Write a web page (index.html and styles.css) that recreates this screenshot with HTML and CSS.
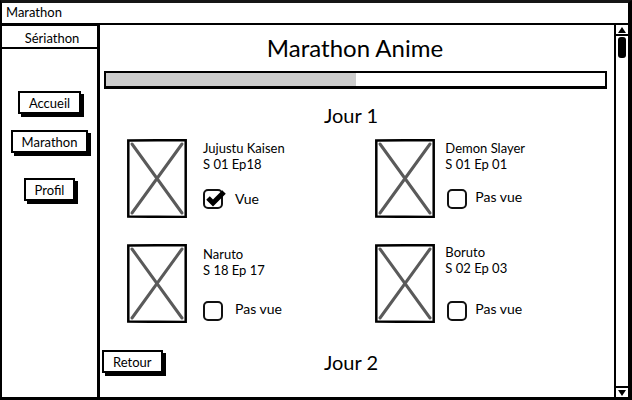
FILE: index.html
```html
<!DOCTYPE html>
<html lang="fr">
<head>
<meta charset="utf-8">
<meta name="viewport" content="width=device-width, initial-scale=1">
<title>Marathon</title>
<link rel="stylesheet" href="styles.css">
</head>
<body>
<div class="window">
  <header class="titlebar">Marathon</header>
  <div class="body">
    <nav class="sidebar">
      <div class="brand">Sériathon</div>
      <div class="menu">
        <button class="btn" type="button">Accueil</button>
        <button class="btn" type="button">Marathon</button>
        <button class="btn btn-last" type="button">Profil</button>
      </div>
    </nav>
    <main class="main">
      <h1 class="title">Marathon Anime</h1>
      <progress class="progress" value="50" max="100" aria-label="Progression"></progress>
      <div class="day-row"><h2 class="day">Jour 1</h2></div>
      <section class="episodes">
        <article class="card">
          <svg class="poster" viewBox="0 0 60 79" aria-hidden="true"><path class="frame" d="M1.3 1.5 58.7 1V78L1.3 77.6Z"/><path class="cross" d="M5 5 55 74M55 5 5 74"/></svg>
          <div class="info">
            <div>Jujustu Kaisen<br>S 01 Ep18</div>
            <label class="seen checked"><span class="box"><input type="checkbox" checked><svg class="tick" viewBox="0 0 24 20" aria-hidden="true"><path d="M5 9 10 14 21 3"/></svg></span>Vue</label>
          </div>
        </article>
        <article class="card">
          <svg class="poster" viewBox="0 0 60 79" aria-hidden="true"><path class="frame" d="M1.3 1.5 58.7 1V78L1.3 77.6Z"/><path class="cross" d="M5 5 55 74M55 5 5 74"/></svg>
          <div class="info">
            <div>Demon Slayer<br>S 01 Ep 01</div>
            <label class="seen"><span class="box"><input type="checkbox"></span>Pas vue</label>
          </div>
        </article>
        <article class="card low">
          <svg class="poster" viewBox="0 0 60 79" aria-hidden="true"><path class="frame" d="M1.3 1.5 58.7 1V78L1.3 77.6Z"/><path class="cross" d="M5 5 55 74M55 5 5 74"/></svg>
          <div class="info">
            <div>Naruto<br>S 18 Ep 17</div>
            <label class="seen"><span class="box"><input type="checkbox"></span>Pas vue</label>
          </div>
        </article>
        <article class="card low">
          <svg class="poster" viewBox="0 0 60 79" aria-hidden="true"><path class="frame" d="M1.3 1.5 58.7 1V78L1.3 77.6Z"/><path class="cross" d="M5 5 55 74M55 5 5 74"/></svg>
          <div class="info">
            <div>Boruto<br>S 02 Ep 03</div>
            <label class="seen"><span class="box"><input type="checkbox"></span>Pas vue</label>
          </div>
        </article>
      </section>
      <div class="day-row">
        <button class="btn" type="button">Retour</button>
        <h2 class="day">Jour 2</h2>
      </div>
    </main>
    <div class="scrollbar">
      <button class="arrow up" type="button" aria-label="Défiler vers le haut"><svg viewBox="0 0 8 6"><path d="M4 0 8 6H0Z"/></svg></button>
      <div class="track"><div class="thumb"></div></div>
      <button class="arrow down" type="button" aria-label="Défiler vers le bas"><svg viewBox="0 0 8 6"><path d="M0 0H8L4 6Z"/></svg></button>
    </div>
  </div>
</div>
</body>
</html>
```
FILE: styles.css
```css
* { box-sizing: border-box; }
body {
  margin: 0;
  background: #fff;
  color: #000;
  font: 13px/16px Lato, "Open Sans", sans-serif;
}
button { font: inherit; color: inherit; }
.window {
  min-height: 100vh;
  display: flex;
  flex-direction: column;
  border: solid #000;
  border-width: 3px 4px 3px 2px;
  border-top-color: #151515;
}
.titlebar {
  height: 22px;
  padding: 1px 4px;
  border-bottom: 2px solid #000;
}
.body { flex: 1; display: flex; }
.sidebar { width: 98px; border-right: 3px solid #000; }
.brand {
  height: 24px;
  margin: 0 -3px 0 -2px;
  padding: 4px 0 0 4px;
  border: solid #000;
  border-width: 1px 2px 2px;
  text-align: center;
}
.menu {
  display: flex;
  flex-direction: column;
  align-items: center;
  gap: 16px;
  padding-top: 42px;
}
.btn {
  height: 23px;
  padding: 0 9px;
  border: 2px solid #000;
  background: #fff;
  box-shadow: 3px 3px 0 #000;
  line-height: 18px;
}
.btn-last { margin-top: 9px; }
.main { flex: 1; min-width: 0; }
.title {
  margin: 9px 8px 9px 4px;
  font-size: 24px;
  line-height: 28px;
  font-weight: 400;
  text-align: center;
}
.progress {
  appearance: none;
  display: block;
  width: calc(100% - 11px);
  height: 18px;
  margin: 0 7px 0 4px;
  border: 2px solid #000;
  border-bottom-width: 3px;
}
.progress::-webkit-progress-bar { background: #fff; }
.progress::-webkit-progress-value { background: #ccc; }
.day-row {
  display: grid;
  grid-template-columns: 1fr auto 1fr;
  margin: 14px 14px 0 2px;
}
.day-row .btn { justify-self: start; }
.day {
  grid-column: 2;
  margin: 0;
  font-size: 20px;
  line-height: 24px;
  font-weight: 400;
}
.episodes {
  display: grid;
  grid-template-columns: 51% 49%;
  row-gap: 26px;
  padding: 12px 0 13px 27px;
}
.card { display: flex; gap: 16px; }
.card:nth-child(even) { gap: 10px; }
.poster { width: 60px; height: 79px; fill: none; }
.frame { stroke: #000; stroke-width: 2.500; }
.cross { stroke: #5a5a5a; stroke-width: 3; stroke-linecap: round; }
.info {
  display: flex;
  flex-direction: column;
  justify-content: space-between;
  padding: 1px 0 9px;
}
.low .info { padding: 2px 0; }
.low:nth-child(even) .info { padding-top: 0; }
.seen {
  display: flex;
  align-items: flex-start;
  gap: 12px;
  font-size: 14px;
}
.checked { align-items: center; }
.card:nth-child(even) .seen { gap: 8px; padding-left: 2px; }
.box { position: relative; display: flex; }
.box input {
  appearance: none;
  width: 20px;
  height: 20px;
  margin: 0;
  border: 2px solid #111;
  border-radius: 5px;
}
.tick {
  position: absolute;
  left: 0;
  top: 0;
  width: 24px;
  height: 20px;
  fill: none;
  stroke: #000;
  stroke-width: 5;
}
.scrollbar {
  width: 14px;
  display: flex;
  flex-direction: column;
  border-left: 2px solid #000;
}
.arrow {
  height: 11px;
  padding: 0;
  border: 0 solid #000;
  background: #fff;
  display: flex;
  justify-content: center;
  align-items: center;
}
.arrow svg { width: 8px; height: 6px; }
.up { border-bottom-width: 2px; }
.down { border-top-width: 2px; }
.track { flex: 1; padding: 1px 2px; }
.thumb { height: 21px; border-radius: 3px; background: #000; }
```
